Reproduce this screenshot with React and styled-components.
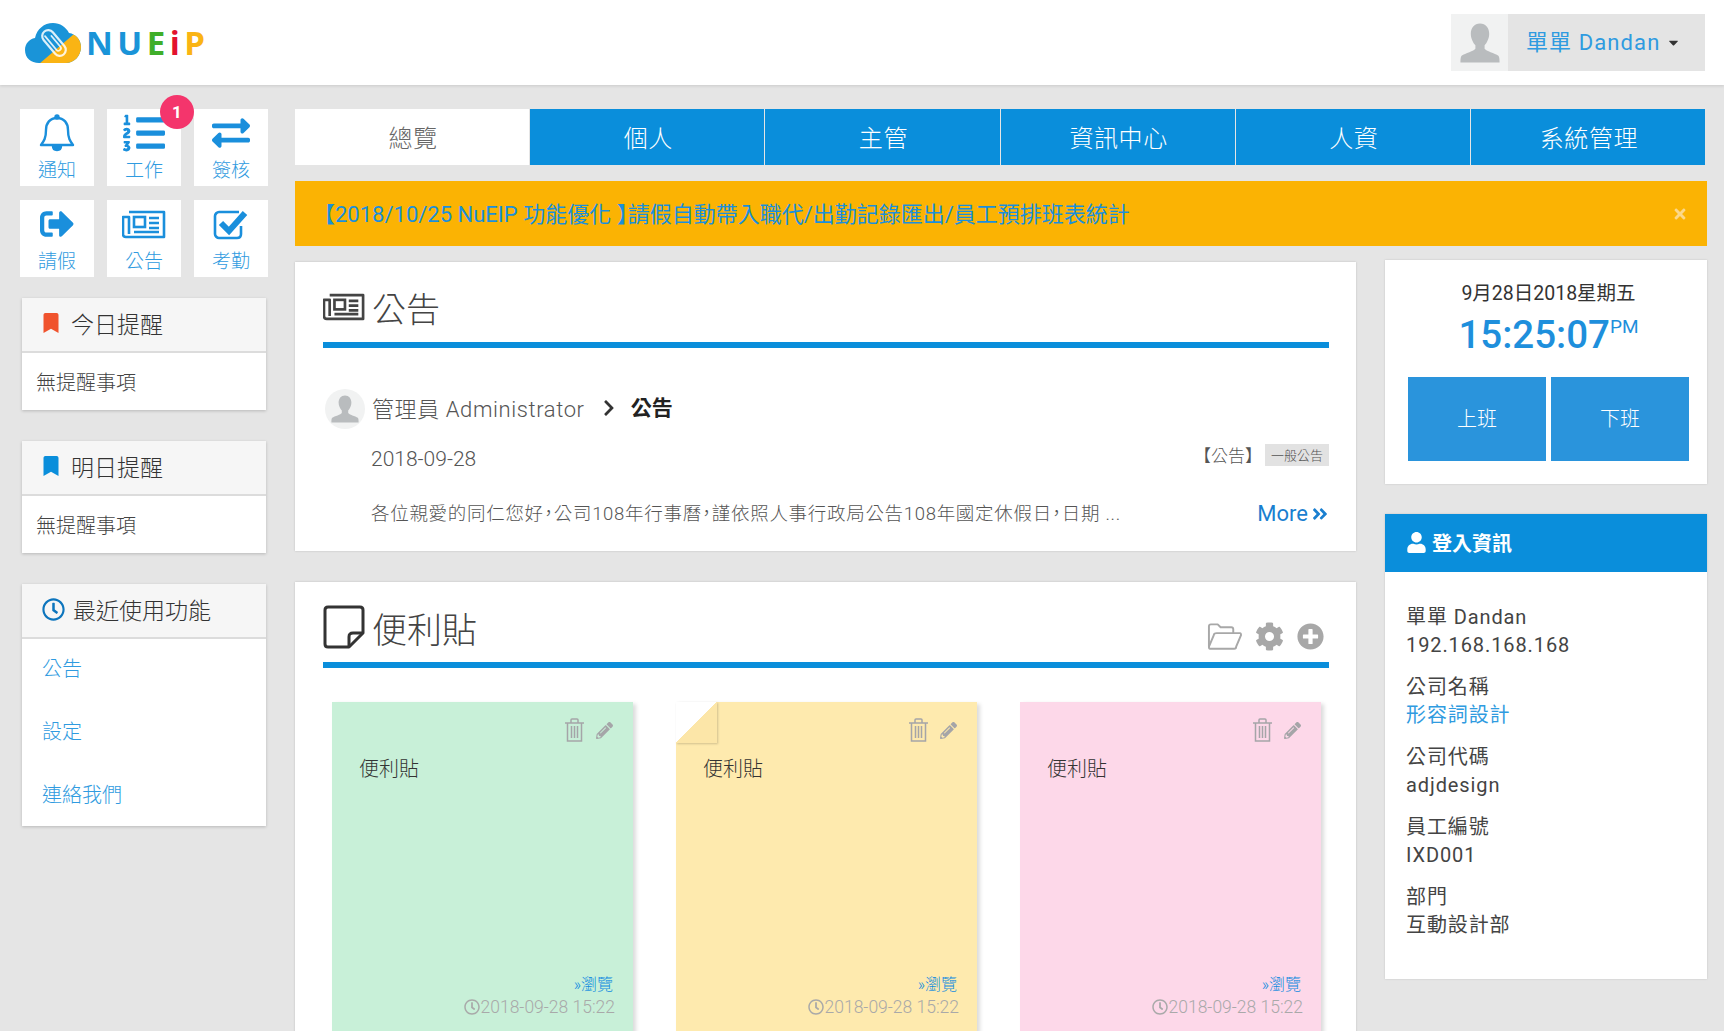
import React from "react";
import styled, { createGlobalStyle } from "styled-components";
import {
	FaBookmark,
	FaRegClock,
	FaChevronRight,
	FaAngleDoubleRight,
	FaCog,
	FaPlusCircle,
	FaPencilAlt,
	FaUser,
	FaCaretDown,
	FaTimes,
	FaExchangeAlt,
	FaSignOutAlt,
	FaListOl,
} from "react-icons/fa";

const blue = "#0a8edb";
const linkBlue = "#2f9be0";

const GlobalStyle = createGlobalStyle`
	html, body {
		margin: 0;
		padding: 0;
		height: 100%;
		overflow: hidden;
		background: #e5e5e5;
		font-family: Roboto, "Noto Sans CJK TC", sans-serif;
		color: #444;
	}
	* { box-sizing: border-box; }
`;

const Page = styled.div`
	height: 1031px;
	overflow: hidden;
`;

const TopBar = styled.header`
	height: 85px;
	background: #fff;
	box-shadow: 0 1px 3px rgba(0, 0, 0, 0.12);
	display: flex;
	align-items: center;
	justify-content: space-between;
	padding: 0 19px 0 25px;
`;

const Logo = styled.div`
	display: flex;
	align-items: center;
	gap: 5px;
`;

const LogoText = styled.div`
	font-family: "Open Sans", sans-serif;
	font-weight: 700;
	font-size: 33px;
	line-height: 1;
	letter-spacing: 4.5px;
`;

const LogoLetter = styled.span`
	color: ${(p) => p.$color};
`;

const UserMenu = styled.div`
	display: flex;
	width: 254px;
	height: 57px;
	background: #e4e4e4;
`;

const UserAvatar = styled.div`
	width: 57px;
	background: #f1f2f2;
	display: flex;
	align-items: center;
	justify-content: center;
`;

const UserName = styled.div`
	flex: 1;
	display: flex;
	align-items: center;
	padding: 0 0 5px 18px;
	gap: 6px;
	color: ${linkBlue};
	font-size: 22px;
	letter-spacing: 1.1px;
	svg {
		color: #333;
		font-size: 15px;
		margin-top: 5px;
	}
`;

const Body = styled.div`
	display: flex;
	padding: 24px 17px 0 20px;
	gap: 28px;
`;

const Sidebar = styled.aside`
	width: 247px;
	flex: none;
`;

const TileGrid = styled.div`
	display: grid;
	grid-template-columns: repeat(3, 74px);
	grid-auto-rows: 77px;
	gap: 14px 13px;
	margin-bottom: 21px;
`;

const Tile = styled.div`
	position: relative;
	background: #fff;
	display: flex;
	flex-direction: column;
	align-items: center;
	padding-top: 2px;
	color: ${linkBlue};
	font-size: 19px;
	line-height: 24px;
	font-weight: 300;
`;

const TileIcon = styled.div`
	height: 44px;
	margin-bottom: 4px;
	display: flex;
	align-items: center;
	justify-content: center;
	color: #1a8fdc;
`;

const Badge = styled.span`
	position: absolute;
	top: -14px;
	right: -13px;
	width: 34px;
	height: 34px;
	border-radius: 50%;
	background: #f4356c;
	color: #fff;
	font-size: 17px;
	font-weight: 700;
	display: flex;
	align-items: center;
	justify-content: center;
`;

const SideCard = styled.section`
	margin: 0 1px 31px 2px;
	box-shadow: 0 1px 3px rgba(0, 0, 0, 0.2);
	background: #fff;
`;

const SideHead = styled.div`
	height: 55px;
	background: #f6f6f6;
	border-bottom: 2px solid #dcdcdc;
	display: flex;
	align-items: center;
	gap: ${(p) => p.$gap || 13}px;
	padding: 0 0 3px ${(p) => p.$pad || 19}px;
	font-size: 23px;
	font-weight: 300;
	color: #333;
`;

const SideText = styled.div`
	height: 57px;
	padding-left: 14px;
	display: flex;
	align-items: center;
	font-size: 20px;
	font-weight: 300;
	color: #444;
`;

const SideLinks = styled.div`
	padding: 16px 0 16px 20px;
	display: flex;
	flex-direction: column;
	gap: 34px;
	font-size: 20px;
	line-height: 29px;
	color: ${linkBlue};
	font-weight: 300;
`;

const Content = styled.main`
	flex: 1;
	min-width: 0;
`;

const Tabs = styled.nav`
	display: grid;
	grid-template-columns: repeat(6, 1fr);
	gap: 1px;
	height: 56px;
	width: 1410px;
	margin-bottom: 16px;
`;

const Tab = styled.div`
	background: ${(p) => (p.$active ? "#fff" : blue)};
	color: ${(p) => (p.$active ? "#666" : "#fff")};
	font-size: 24px;
	font-weight: 300;
	letter-spacing: 0.6px;
	padding: 0 0 2px 2px;
	display: flex;
	align-items: center;
	justify-content: center;
`;

const Banner = styled.div`
	height: 65px;
	background: #fbb303;
	color: #1a8fdc;
	font-size: 22px;
	font-weight: 400;
	font-feature-settings: "halt";
	display: flex;
	align-items: center;
	justify-content: space-between;
	padding: 0 19px 4px 29px;
	margin-bottom: 14px;
	svg {
		color: #fcd88a;
		font-size: 16px;
		margin-top: 4px;
	}
`;

const Columns = styled.div`
	display: flex;
	gap: 29px;
`;

const CenterColumn = styled.div`
	width: 1061px;
	flex: none;
	padding-top: 2px;
	display: flex;
	flex-direction: column;
	gap: 31px;
`;

const RightColumn = styled.div`
	width: 322px;
	flex: none;
	display: flex;
	flex-direction: column;
	gap: 30px;
`;

const Card = styled.section`
	background: #fff;
	padding: 0 27px 0 28px;
	box-shadow: 0 0 2px rgba(0, 0, 0, 0.18);
	height: ${(p) => p.$height || "auto"};
`;

const CardHead = styled.div`
	height: ${(p) => p.$height}px;
	border-bottom: 6px solid ${blue};
	padding-top: 10px;
	display: flex;
	align-items: center;
	justify-content: space-between;
	color: #444;
`;

const CardTitle = styled.h2`
	margin: 0;
	font-weight: 300;
	font-size: ${(p) => p.$size}px;
	display: flex;
	align-items: center;
	gap: 7px;
`;

const CardTools = styled.div`
	display: flex;
	align-items: center;
	gap: 13px;
	color: #a8a8a8;
	padding: 18px 5px 0 0;
`;

const AuthorRow = styled.div`
	display: flex;
	align-items: center;
	margin-top: 41px;
	height: 40px;
	padding-left: 2px;
`;

const AuthorAvatar = styled.div`
	width: 40px;
	height: 40px;
	border-radius: 50%;
	background: #f1f2f2;
	display: flex;
	align-items: center;
	justify-content: center;
	margin-right: 7px;
`;

const AuthorName = styled.span`
	font-size: 22px;
	font-weight: 300;
	color: #555;
	letter-spacing: 0.6px;
	padding-bottom: 5px;
`;

const Crumb = styled.span`
	margin: 0 13px 0 15px;
	font-size: 18px;
	color: #333;
	display: flex;
	padding-bottom: 2px;
`;

const CrumbTitle = styled.span`
	font-size: 21px;
	font-weight: 700;
	color: #222;
	padding-bottom: 7px;
`;

const MetaRow = styled.div`
	display: flex;
	align-items: flex-start;
	justify-content: space-between;
	padding-left: 48px;
	margin-top: ${(p) => p.$top}px;
`;

const DateText = styled.span`
	font-size: 21px;
	font-weight: 300;
	color: #555;
`;

const TagWrap = styled.div`
	display: flex;
	align-items: center;
	margin-top: -5px;
	font-size: 17px;
	color: #555;
	font-weight: 300;
`;

const Tag = styled.span`
	margin-left: 3px;
	background: #e2e2e2;
	font-size: 13px;
	width: 64px;
	height: 22px;
	display: flex;
	align-items: center;
	justify-content: center;
	color: #555;
`;

const Excerpt = styled.span`
	font-size: 18.5px;
	font-weight: 300;
	color: #555;
	letter-spacing: 0.7px;
	font-feature-settings: "halt";
`;

const More = styled.span`
	color: #1a7fd0;
	font-size: 22px;
	margin-top: 2px;
	display: flex;
	align-items: center;
	gap: 3px;
`;

const NoteRow = styled.div`
	display: grid;
	grid-template-columns: repeat(3, 301px);
	gap: 43px;
	padding: 34px 8px 0 9px;
`;

const Note = styled.article`
	position: relative;
	height: 340px;
	background: ${(p) => p.$color};
	box-shadow: 3px 2px 4px rgba(0, 0, 0, 0.14);
	padding: 16px 20px 0 27px;
	${(p) =>
		p.$folded &&
		`
		&::before {
			content: "";
			position: absolute;
			top: 0;
			left: 0;
			width: 41px;
			height: 41px;
			background: linear-gradient(135deg, #fff 50%, #fce6a8 50%);
			box-shadow: 1px 1px 2px rgba(0, 0, 0, 0.18);
		}
	`}
`;

const NoteTools = styled.div`
	display: flex;
	justify-content: flex-end;
	align-items: center;
	gap: 12px;
	color: #a5a5a8;
`;

const NoteTitle = styled.div`
	font-size: 20px;
	font-weight: 300;
	color: #333;
	margin-top: 11px;
`;

const NoteFoot = styled.div`
	position: absolute;
	right: 18px;
	top: 272px;
	text-align: right;
`;

const NoteLink = styled.div`
	color: #0f8ae0;
	font-size: 16px;
	line-height: 22px;
	font-weight: 300;
	margin-right: 2px;
`;

const NoteDate = styled.div`
	color: #a9a9a9;
	font-size: 17.5px;
	line-height: 22px;
	font-weight: 300;
	display: flex;
	align-items: center;
	gap: 1px;
`;

const ClockCard = styled.section`
	height: 224px;
	background: #fff;
	box-shadow: 0 0 2px rgba(0, 0, 0, 0.15);
	padding: 20px 18px 0 23px;
	display: flex;
	flex-direction: column;
	align-items: center;
`;

const ClockDate = styled.div`
	font-size: 19.5px;
	line-height: 28px;
	color: #333;
`;

const ClockTime = styled.div`
	font-size: 38.5px;
	line-height: 50px;
	font-weight: 500;
	color: #1e8fdc;
	margin: 2px 0 17px;
	sup {
		font-size: 19px;
		font-weight: 400;
		line-height: 0;
		vertical-align: 15px;
	}
`;

const PunchRow = styled.div`
	display: flex;
	gap: 5px;
	width: 100%;
`;

const PunchButton = styled.div`
	flex: 1;
	height: 84px;
	background: #2a94dc;
	color: #fff;
	font-size: 20px;
	font-weight: 300;
	padding-bottom: 4px;
	display: flex;
	align-items: center;
	justify-content: center;
`;

const InfoCard = styled.section`
	height: 465px;
	background: #fff;
	box-shadow: 0 0 2px rgba(0, 0, 0, 0.15);
`;

const InfoHead = styled.div`
	height: 58px;
	background: ${blue};
	color: #fff;
	font-size: 20px;
	font-weight: 700;
	display: flex;
	align-items: center;
	gap: 5px;
	padding: 0 0 2px 21px;
`;

const InfoBody = styled.div`
	padding: 31px 0 0 21px;
	display: flex;
	flex-direction: column;
	gap: 14px;
`;

const InfoGroup = styled.div`
	font-size: 20px;
	line-height: 28px;
	color: #444;
	letter-spacing: 0.9px;
	font-weight: 400;
`;

const InfoLink = styled.div`
	color: ${linkBlue};
`;

const Person = ({ size, color = "#b9bcbe" }) => (
	<svg width={size} height={size} viewBox="0 0 40 40" fill={color}>
		<path d="M20 3c-5 0-8 4-8 9 0 4 2 8 4 10v3c-1 2-9 4-12 6-1 1-1 4-1 6h34c0-2 0-5-1-6-3-2-11-4-12-6v-3c2-2 4-6 4-10 0-5-3-9-8-9z" />
	</svg>
);

const CloudLogo = () => (
	<svg width="56" height="42" viewBox="0 0 56 42">
		<defs>
			<clipPath id="cloudShape">
				<path d="M14 41C6 41 0 36 0 28c0-6 4-11 10-12 2-9 9-15 18-15 7 0 13 4 16 10 7 1 12 7 12 14 0 9-7 16-15 16z" />
			</clipPath>
		</defs>
		<g clipPath="url(#cloudShape)">
			<rect width="56" height="42" fill="#1a94d8" />
			<path d="M14 42 L56 6 V42 Z" fill="#fab414" />
		</g>
		<g transform="rotate(-40 29 21)" fill="none" stroke="#fff" strokeOpacity="0.85" strokeLinecap="round">
			<rect x="23" y="6" width="12" height="30" rx="6" strokeWidth="2.2" />
			<path d="M26.5 10v18c0 3 5 3 5 0V14" strokeWidth="1.8" />
		</g>
	</svg>
);

const Bell = () => (
	<svg width="36" height="38" viewBox="0 0 36 38" fill="none" stroke="currentColor" strokeWidth="2.4">
		<path d="M18 4c-7 0-11 5-11 12 0 8-2 11-5 15h32c-3-4-5-7-5-15 0-7-4-12-11-12z" strokeLinejoin="round" />
		<circle cx="18" cy="3" r="1.5" fill="currentColor" />
		<path d="M14 32c0 3 2 4 4 4s4-1 4-4" fill="currentColor" />
	</svg>
);

const Newspaper = ({ width = 44, height = 29, strokeWidth = 2.6 }) => (
	<svg width={width} height={height} viewBox="0 0 44 29" fill="none" stroke="currentColor" strokeWidth={strokeWidth}>
		<path d="M7 2h35v25H4c-2 0-3-1-3-3V7h6v17" strokeLinejoin="round" />
		<rect x="12" y="7" width="11" height="10" />
		<path d="M27 8h10M27 13h10M27 18h10M12 22h25" />
	</svg>
);

const CheckBox = () => (
	<svg width="36" height="32" viewBox="0 0 36 32" fill="none" stroke="currentColor">
		<path d="M28 18v8c0 2-1 4-4 4H6c-2 0-4-2-4-4V8c0-2 2-4 4-4h20" strokeWidth="2.6" />
		<path d="M8 15l8 8L32 5" strokeWidth="6" />
	</svg>
);

const StickyNote = () => (
	<svg width="42" height="44" viewBox="0 0 42 44" fill="none" stroke="#333" strokeWidth="3">
		<path d="M40 28V5c0-2-1-3-3-3H5C3 2 2 3 2 5v34c0 2 1 3 3 3h21z" strokeLinejoin="round" />
		<path d="M40 28H30c-3 0-4 1-4 4v10" />
	</svg>
);

const FolderOpen = () => (
	<svg width="35" height="27" viewBox="0 0 36 27" fill="none" stroke="currentColor" strokeWidth="2" strokeLinejoin="round">
		<path d="M2 24V3c0-1 0-2 2-2h7l3 3h11c2 0 2 1 2 2v4" />
		<path d="M2 24l5-12c0-1 1-2 3-2h24c1 0 1 1 1 2l-5 12c0 1-1 2-2 2H3c-1 0-1-1-1-2z" />
	</svg>
);

const Trash = () => (
	<svg width="19" height="24" viewBox="0 0 19 24" fill="none" stroke="currentColor" strokeWidth="1.5">
		<path d="M0 5h19M6 5V2c0-1 .5-1 1-1h5c.5 0 1 0 1 1v3M2.5 5v18h14V5M6.5 8v12M9.5 8v12M12.5 8v12" />
	</svg>
);

const tiles = [
	{ label: "通知", icon: <Bell /> },
	{ label: "工作", icon: <FaListOl size={42} />, badge: 1 },
	{ label: "簽核", icon: <FaExchangeAlt size={38} /> },
	{ label: "請假", icon: <FaSignOutAlt size={34} /> },
	{ label: "公告", icon: <Newspaper /> },
	{ label: "考勤", icon: <CheckBox /> },
];

const tabs = ["總覽", "個人", "主管", "資訊中心", "人資", "系統管理"];

const notes = [
	{ color: "#c8f0d8" },
	{ color: "#feeaae", folded: true },
	{ color: "#fdd8e9" },
];

const info = [
	["單單 Dandan", "192.168.168.168"],
	["公司名稱", "形容詞設計", true],
	["公司代碼", "adjdesign"],
	["員工編號", "IXD001"],
	["部門", "互動設計部"],
];

const App = () => {
	return (
		<Page>
			<GlobalStyle />
			<TopBar>
				<Logo>
					<CloudLogo />
					<LogoText>
						<LogoLetter $color="#1a94d8">NU</LogoLetter>
						<LogoLetter $color="#3fae2a">E</LogoLetter>
						<LogoLetter $color="#e3122d">i</LogoLetter>
						<LogoLetter $color="#fab414">P</LogoLetter>
					</LogoText>
				</Logo>
				<UserMenu>
					<UserAvatar>
						<Person size={46} />
					</UserAvatar>
					<UserName>
						單單 Dandan <FaCaretDown />
					</UserName>
				</UserMenu>
			</TopBar>
			<Body>
				<Sidebar>
					<TileGrid>
						{tiles.map((tile) => (
							<Tile key={tile.label}>
								<TileIcon>{tile.icon}</TileIcon>
								{tile.label}
								{tile.badge && <Badge>{tile.badge}</Badge>}
							</Tile>
						))}
					</TileGrid>
					<SideCard>
						<SideHead $gap={10}>
							<FaBookmark color="#f0532d" size={20} />
							今日提醒
						</SideHead>
						<SideText>無提醒事項</SideText>
					</SideCard>
					<SideCard>
						<SideHead $gap={10}>
							<FaBookmark color="#0a8edb" size={20} />
							明日提醒
						</SideHead>
						<SideText>無提醒事項</SideText>
					</SideCard>
					<SideCard>
						<SideHead $pad={20} $gap={8}>
							<FaRegClock color="#0d75bd" size={23} />
							最近使用功能
						</SideHead>
						<SideLinks>
							<span>公告</span>
							<span>設定</span>
							<span>連絡我們</span>
						</SideLinks>
					</SideCard>
				</Sidebar>
				<Content>
					<Tabs>
						{tabs.map((tab, i) => (
							<Tab key={tab} $active={i === 0}>
								{tab}
							</Tab>
						))}
					</Tabs>
					<Banner>
						【2018/10/25 NuEIP 功能優化 】請假自動帶入職代/出勤記錄匯出/員工預排班表統計
						<FaTimes />
					</Banner>
					<Columns>
						<CenterColumn>
							<Card $height="289px">
								<CardHead $height={86}>
									<CardTitle $size={34}>
										<Newspaper width={42} height={28} strokeWidth={2.8} />
										公告
									</CardTitle>
								</CardHead>
								<AuthorRow>
									<AuthorAvatar>
										<Person size={32} />
									</AuthorAvatar>
									<AuthorName>管理員 Administrator</AuthorName>
									<Crumb>
										<FaChevronRight />
									</Crumb>
									<CrumbTitle>公告</CrumbTitle>
								</AuthorRow>
								<MetaRow $top={18}>
									<DateText>2018-09-28</DateText>
									<TagWrap>
										【公告】
										<Tag>一般公告</Tag>
									</TagWrap>
								</MetaRow>
								<MetaRow $top={28}>
									<Excerpt>各位親愛的同仁您好，公司108年行事曆，謹依照人事行政局公告108年國定休假日，日期 ...</Excerpt>
									<More>
										More <FaAngleDoubleRight size={18} />
									</More>
								</MetaRow>
							</Card>
							<Card>
								<CardHead $height={86}>
									<CardTitle $size={35}>
										<StickyNote />
										便利貼
									</CardTitle>
									<CardTools>
										<FolderOpen />
										<FaCog size={29} />
										<FaPlusCircle size={27} />
									</CardTools>
								</CardHead>
								<NoteRow>
									{notes.map((note) => (
										<Note key={note.color} $color={note.color} $folded={note.folded}>
											<NoteTools>
												<Trash />
												<FaPencilAlt size={17} />
											</NoteTools>
											<NoteTitle>便利貼</NoteTitle>
											<NoteFoot>
												<NoteLink>»瀏覽</NoteLink>
												<NoteDate>
													<FaRegClock size={16} />
													2018-09-28 15:22
												</NoteDate>
											</NoteFoot>
										</Note>
									))}
								</NoteRow>
							</Card>
						</CenterColumn>
						<RightColumn>
							<ClockCard>
								<ClockDate>9月28日2018星期五</ClockDate>
								<ClockTime>
									15:25:07<sup>PM</sup>
								</ClockTime>
								<PunchRow>
									<PunchButton>上班</PunchButton>
									<PunchButton>下班</PunchButton>
								</PunchRow>
							</ClockCard>
							<InfoCard>
								<InfoHead>
									<FaUser size={21} />
									登入資訊
								</InfoHead>
								<InfoBody>
									{info.map(([top, bottom, link]) => (
										<InfoGroup key={top}>
											<div>{top}</div>
											{link ? <InfoLink>{bottom}</InfoLink> : <div>{bottom}</div>}
										</InfoGroup>
									))}
								</InfoBody>
							</InfoCard>
						</RightColumn>
					</Columns>
				</Content>
			</Body>
		</Page>
	);
};

export default App;
